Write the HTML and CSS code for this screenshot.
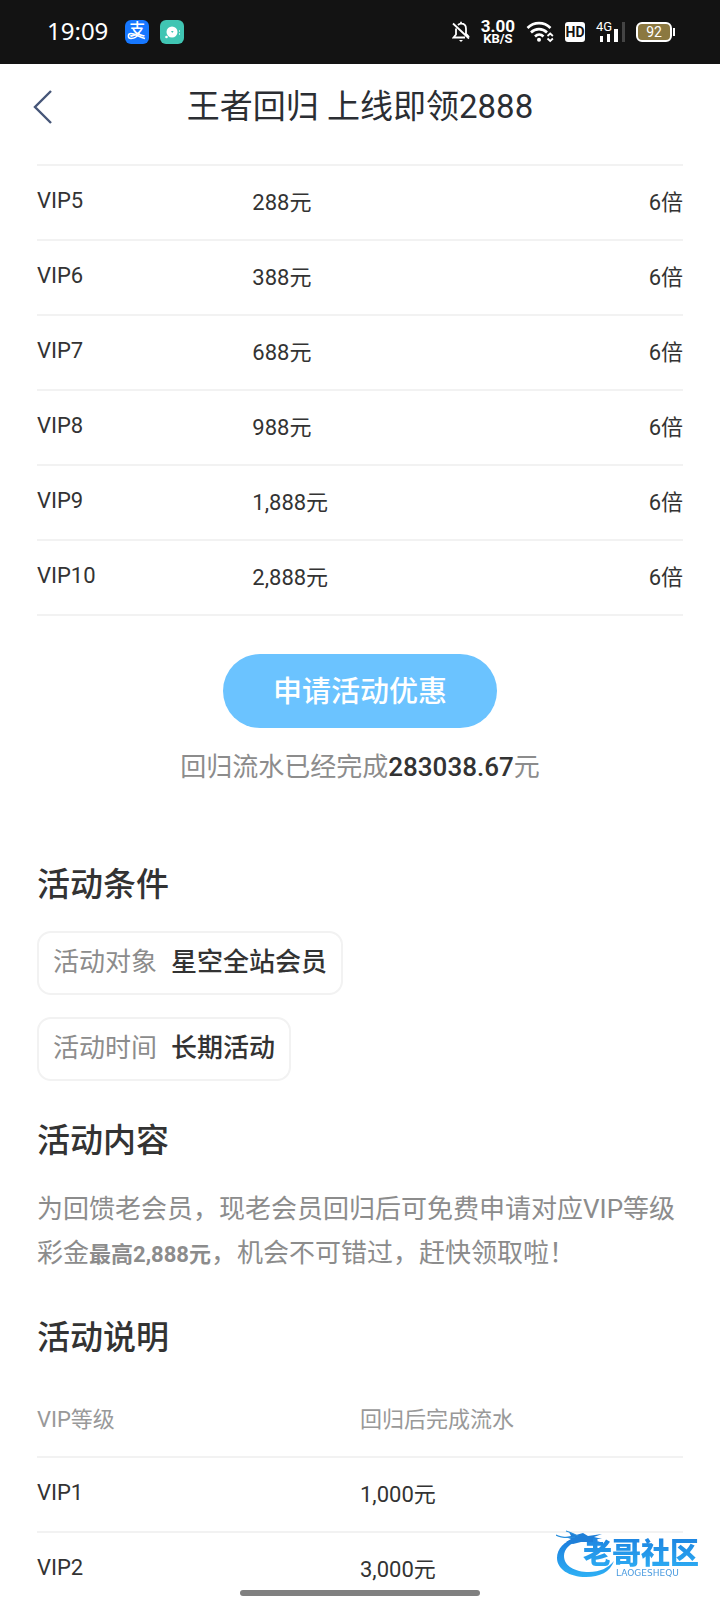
FILE: index.html
```html
<!DOCTYPE html>
<html lang="zh-CN">
<head>
    <meta charset="UTF-8">
    <meta name="viewport" content="width=device-width, initial-scale=1.0">
    <title>王者回归 上线即领2888</title>
    <link rel="stylesheet" href="styles.css">
</head>
<body>
    <div class="status-bar">
        <div class="status-left">
            <span class="time">19:09</span>
            <span class="app-icon pay">支
                <svg class="swoosh" viewBox="0 0 24 24"><path d="M20 18.500C14 17 10 13.500 6 13.500c-3.500 0-3.500 5 0 5 4 0 7-3 8.500-6" fill="none" stroke="#fff" stroke-width="1.500"/></svg>
            </span>
            <svg class="app-icon" viewBox="0 0 24 24">
                <rect width="24" height="24" rx="6" fill="#40c5b3"/>
                <circle cx="12" cy="12" r="5.500" fill="#fff"/>
                <path d="M11 11h2.600l-1.300 2z" fill="#40c5b3"/>
                <circle cx="6.500" cy="17" r="1.300" fill="#fff"/>
                <path d="M19.500 10v2M19.500 13v2" stroke="#b5e9e1" stroke-width="1"/>
            </svg>
        </div>
        <div class="status-right">
            <svg width="18" height="22" viewBox="0 0 18 22" fill="none" stroke="#fff" stroke-width="1.800">
                <path d="M1 2.500l16 15M4 7.500v6L1.500 16.500H13M6 4C7 3 8 2.700 9 2.700c3 0 5 2 5 5v5l3 3.500M9 .800v2"/>
                <path d="M7 19h4l-2 2z" fill="#fff" stroke="none"/>
            </svg>
            <span class="speed"><b>3.00</b><small>KB/S</small></span>
            <svg width="28" height="22" viewBox="0 0 28 22" fill="none" stroke="#fff" stroke-width="2.600">
                <path d="M1.500 7c6.500-6.500 16.500-6.500 23 0M5 11.500c4.500-4.500 11.500-4.500 16 0M9 15.500c2.500-2.500 6-2.500 8.500 0"/>
                <circle cx="13" cy="18.800" r="2" fill="#fff" stroke="none"/>
                <path d="M21.500 15l2.700-2.500 2.700 2.500M21.500 17.500l2.700 2.500 2.700-2.500" stroke-width="1.800"/>
            </svg>
            <span class="hd">HD</span>
            <span class="signal">
                <span class="net">4G</span>
                <svg width="29" height="20" viewBox="0 0 29 20">
                    <path d="M4 14h3v6H4zM11 12h3v8h-3zM18 7h4v13h-4z" fill="#fff"/>
                    <path d="M26 0h3v20h-3z" fill="#444"/>
                </svg>
            </span>
            <span class="battery">92</span>
        </div>
    </div>

    <header class="header">
        <button type="button" class="back" aria-label="返回">
            <svg width="20" height="36" viewBox="0 0 20 36" fill="none" stroke="#465678" stroke-width="2.400"><path d="M19 2L3 18l16 16"/></svg>
        </button>
        <h1>王者回归 上线即领2888</h1>
    </header>

    <main class="content">
        <table class="bonus">
            <tr><td class="level">VIP5</td><td>288元</td><td>6倍</td></tr>
            <tr><td class="level">VIP6</td><td>388元</td><td>6倍</td></tr>
            <tr><td class="level">VIP7</td><td>688元</td><td>6倍</td></tr>
            <tr><td class="level">VIP8</td><td>988元</td><td>6倍</td></tr>
            <tr><td class="level">VIP9</td><td>1,888元</td><td>6倍</td></tr>
            <tr><td class="level">VIP10</td><td>2,888元</td><td>6倍</td></tr>
        </table>

        <button type="button" class="apply">申请活动优惠</button>
        <p class="progress">回归流水已经完成<strong>283038.67</strong>元</p>

        <h2>活动条件</h2>
        <div class="tags">
            <p class="tag"><span>活动对象</span><strong>星空全站会员</strong></p>
            <p class="tag"><span>活动时间</span><strong>长期活动</strong></p>
        </div>

        <h2>活动内容</h2>
        <p class="desc">为回馈老会员，现老会员回归后可免费申请对应VIP等级彩金<strong>最高2,888元</strong>，机会不可错过，赶快领取啦！</p>

        <h2>活动说明</h2>
        <table class="rules">
            <tr><th>VIP等级</th><th>回归后完成流水</th></tr>
            <tr><td class="level">VIP1</td><td>1,000元</td></tr>
            <tr><td class="level">VIP2</td><td>3,000元</td></tr>
        </table>
    </main>

    <svg class="watermark" width="150" height="54" viewBox="0 0 150 54">
        <defs>
            <linearGradient id="blue" x1="0" y1="0" x2="0" y2="1">
                <stop offset="0" stop-color="#1a7bdc"/>
                <stop offset="1" stop-color="#2eb0f5"/>
            </linearGradient>
        </defs>
        <!-- dragon -->
        <path d="M20 8C8 11 1 19 1 28c0 11 12 19 29 19 14 0 24-5 28-16-6 7-14 11-25 11C19 42 8 36 8 26 8 19 14 13 23 11z" fill="url(#blue)"/>
        <path d="M13 2l7 3 7-2 5 3 14-2-8 3 8 2-8 0 6 3-7-1 2 3-7-2-7 0-8 2-7-2 5-3-6-2 6-1z" fill="#1f7fd8"/>
        <path d="M0 5c5 3 11 3 19 2M10 1c4 1 8 3 12 5" fill="none" stroke="#2a8fdc" stroke-width="1.200"/>
        <text class="mark-name" x="27" y="34">老哥社区</text>
        <text class="mark-sub" x="60" y="46">LAOGESHEQU</text>
    </svg>
    <div class="home-bar"></div>
</body>
</html>
```

FILE: styles.css
```css
* {
    box-sizing: border-box;
}

body {
    margin: 0;
    height: 100vh;
    display: flex;
    flex-direction: column;
    overflow: hidden;
    background-color: #fff;
    color: #333;
    font-family: Roboto, "Noto Sans CJK SC", sans-serif;
}

h1, h2, p {
    margin: 0;
}

h2, strong {
    font-weight: 500;
}

/* status bar */
.status-bar {
    flex: none;
    height: 64px;
    padding: 0 48px 0 47px;
    display: flex;
    align-items: center;
    justify-content: space-between;
    background-color: #131313;
    color: #fff;
}

.status-left, .status-right {
    display: flex;
    align-items: center;
}

.status-left {
    gap: 11px;
}

.status-right {
    gap: 11px;
}

.time {
    margin-right: 6px;
    padding-bottom: 2px;
    font-family: "Noto Sans", sans-serif;
    font-size: 24px;
    line-height: 32px;
}

.app-icon {
    width: 24px;
    height: 24px;
}

.pay {
    position: relative;
    border-radius: 6px;
    background-color: #1677ff;
    font-size: 16px;
    font-weight: 500;
    line-height: 20px;
    text-align: center;
}

.swoosh {
    position: absolute;
    left: 0;
    top: 0;
}

.speed {
    display: flex;
    flex-direction: column;
    align-items: center;
    font-family: Roboto, sans-serif;
}

.speed b {
    font-size: 17px;
    font-weight: 700;
    line-height: 13px;
}

.speed small {
    font-size: 13px;
    font-weight: 700;
    line-height: 12px;
}

.hd {
    width: 20px;
    height: 20px;
    border-radius: 3px;
    background-color: #fff;
    color: #131313;
    font-size: 14px;
    font-weight: 700;
    line-height: 20px;
    text-align: center;
}

.signal {
    position: relative;
    display: flex;
}

.net {
    position: absolute;
    left: 0;
    top: 0;
    font-size: 13px;
    line-height: 10px;
}

.battery {
    position: relative;
    width: 36px;
    height: 20px;
    border: 2px solid #fff;
    border-radius: 6px;
    background-color: #8b7840;
    font-size: 14px;
    line-height: 16px;
    text-align: center;
}

.battery::after {
    content: "";
    position: absolute;
    right: -5px;
    top: 4px;
    width: 2px;
    height: 8px;
    background-color: #fff;
}

/* title */
.header {
    flex: none;
    height: 100px;
    padding: 0 32px 14px;
    display: grid;
    grid-template-columns: 40px 1fr 40px;
    align-items: center;
}

.header h1 {
    font-size: 33px;
    font-weight: 400;
    line-height: 48px;
    text-align: center;
    color: #2b2e33;
}

.back {
    display: flex;
    padding: 0;
    border: 0;
    background: none;
}

/* page content */
.content {
    flex: 1;
    min-height: 0;
    padding: 0 37px;
    overflow-y: auto;
    scrollbar-width: none;
}

table {
    width: 100%;
    table-layout: fixed;
    border-collapse: separate;
    border-spacing: 0;
    font-size: 22px;
    line-height: 32px;
}

td, th {
    height: 75px;
    padding: 0;
    border-bottom: 2px solid #f2f2f2;
    text-align: left;
    font-weight: 400;
}

.bonus {
    border-top: 2px solid #f2f2f2;
}

.bonus td:last-child {
    text-align: right;
}

td.level {
    padding-bottom: 4px;
}

.apply {
    display: block;
    height: 74px;
    margin: 38px auto 0;
    padding: 0 50px 4px;
    border: 0;
    border-radius: 37px;
    background-color: #6bc3ff;
    color: #fff;
    font-family: inherit;
    font-size: 29px;
    font-weight: 500;
}

.progress {
    margin: 19px 0 74px;
    font-size: 26px;
    line-height: 40px;
    text-align: center;
    color: #8c8c8c;
}

.progress strong {
    color: #333;
}

h2 {
    font-size: 33px;
    line-height: 48px;
}

.tags {
    display: flex;
    flex-direction: column;
    align-items: flex-start;
    gap: 22px;
    margin: 22px 0 36px;
}

.tag {
    display: flex;
    gap: 14px;
    height: 64px;
    padding: 0 14px;
    border: 2px solid #f2f2f2;
    border-radius: 14px;
    font-size: 26px;
    line-height: 58px;
}

.tag span {
    color: #8c8c8c;
}

.desc {
    margin: 22px 0 37px;
    font-size: 26px;
    line-height: 44px;
    color: #8c8c8c;
}

.desc strong {
    font-size: 22px;
    font-weight: 700;
}

.rules {
    margin-top: 21px;
}

.rules th {
    color: #999;
}

/* overlays */
.watermark {
    position: fixed;
    right: 14px;
    bottom: 16px;
}

.mark-name {
    font-family: "Noto Sans CJK SC", sans-serif;
    font-size: 29px;
    font-weight: 900;
    fill: url(#blue);
}

.mark-sub {
    font-family: "DejaVu Sans", sans-serif;
    font-size: 9px;
    fill: #4a9be0;
}

.home-bar {
    position: fixed;
    left: 50%;
    bottom: 4px;
    width: 240px;
    height: 6px;
    border-radius: 3px;
    background-color: #808080;
    transform: translateX(-50%);
}
```
